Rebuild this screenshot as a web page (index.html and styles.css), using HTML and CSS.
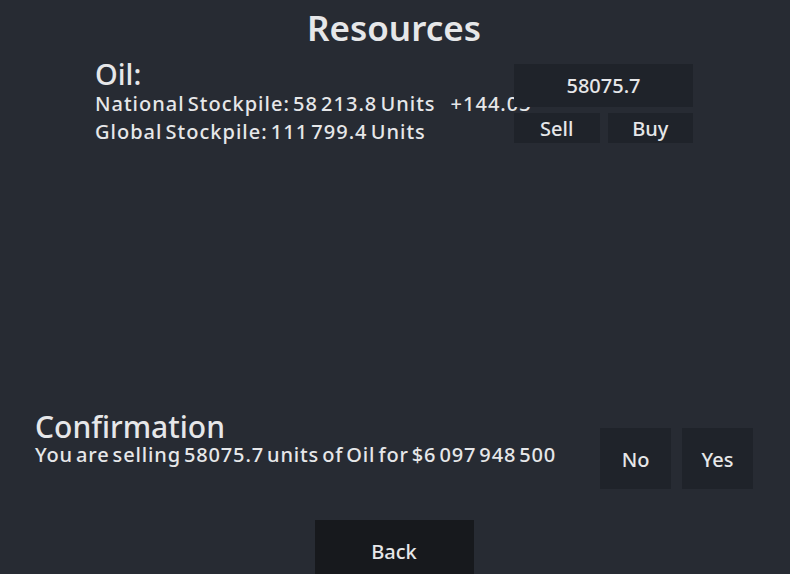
FILE: index.html
```html
<!DOCTYPE html>
<html>
<head>
<meta charset="utf-8">
<link rel="stylesheet" href="styles.css">
</head>
<body>
<div class="screen">
  <h1 class="title">Resources</h1>
  <div class="resource">
    <div class="info">
      <div class="res-name">Oil:</div>
      <div class="line"><span>National Stockpile: 58 213.8 Units</span><span class="delta">+144.03</span></div>
      <div class="line">Global Stockpile: 111 799.4 Units</div>
    </div>
    <div class="controls">
      <div class="amount">58075.7</div>
      <div class="trade">
        <div class="btn small">Sell</div>
        <div class="btn small">Buy</div>
      </div>
    </div>
  </div>
  <div class="confirm">
    <div class="confirm-text">
      <div class="confirm-title">Confirmation</div>
      <div class="line">You are selling 58075.7 units of Oil for $6 097 948 500</div>
    </div>
    <div class="choices">
      <div class="btn big">No</div>
      <div class="btn big">Yes</div>
    </div>
  </div>
  <div class="footer">
    <div class="back">Back</div>
  </div>
</div>
</body>
</html>
```
FILE: styles.css
```css
html, body {
  margin: 0;
  padding: 0;
  background: #272b33;
}
.screen {
  width: 790px;
  height: 574px;
  overflow: hidden;
  display: flex;
  flex-direction: column;
  font-family: "Noto Sans", "DejaVu Sans", sans-serif;
  color: #e6e7e9;
}
.title {
  margin: 0;
  padding-top: 6px;
  text-align: center;
  font-size: 35px;
  font-weight: 600;
  line-height: 44px;
  height: 50px;
  padding-right: 2px;
}
.resource {
  display: flex;
  margin-left: 95px;
  margin-top: 8px;
}
.info {
  width: 419px;
  white-space: nowrap;
}
.res-name {
  font-size: 29px;
  font-weight: 500;
  line-height: 32px;
}
.line {
  font-size: 20px;
  font-weight: 500;
  letter-spacing: 1px;
  word-spacing: -3px;
  line-height: 28px;
  white-space: nowrap;
}
.delta {
  margin-left: 15px;
}
.controls {
  position: relative;
  width: 179px;
  display: flex;
  flex-direction: column;
  gap: 6px;
  margin-top: 6px;
}
.amount {
  height: 43px;
  background: #1f232a;
  display: flex;
  align-items: center;
  justify-content: center;
  font-size: 20px;
  font-weight: 500;
}
.trade {
  display: flex;
  gap: 8px;
}
.btn {
  background: #1f232a;
  display: flex;
  align-items: center;
  justify-content: center;
  font-weight: 500;
}
.small {
  flex: 1;
  height: 30px;
  font-size: 20px;
}
.confirm {
  display: flex;
  margin-top: 264px;
  margin-left: 35px;
}
.confirm-text {
  width: 565px;
}
.confirm-title {
  font-size: 30px;
  font-weight: 500;
  line-height: 34px;
}
.confirm .line {
  line-height: 22px;
  letter-spacing: 0.85px;
}
.choices {
  display: flex;
  gap: 11px;
  margin-top: 18px;
}
.big {
  width: 71px;
  height: 61px;
  font-size: 20px;
  padding-top: 1px;
  box-sizing: border-box;
}
.footer {
  display: flex;
  justify-content: center;
  margin-top: 31px;
  padding-right: 2px;
}
.back {
  width: 159px;
  height: 64px;
  background: #17191d;
  display: flex;
  justify-content: center;
  padding-top: 18px;
  box-sizing: border-box;
  font-size: 20px;
  font-weight: 500;
}
```
